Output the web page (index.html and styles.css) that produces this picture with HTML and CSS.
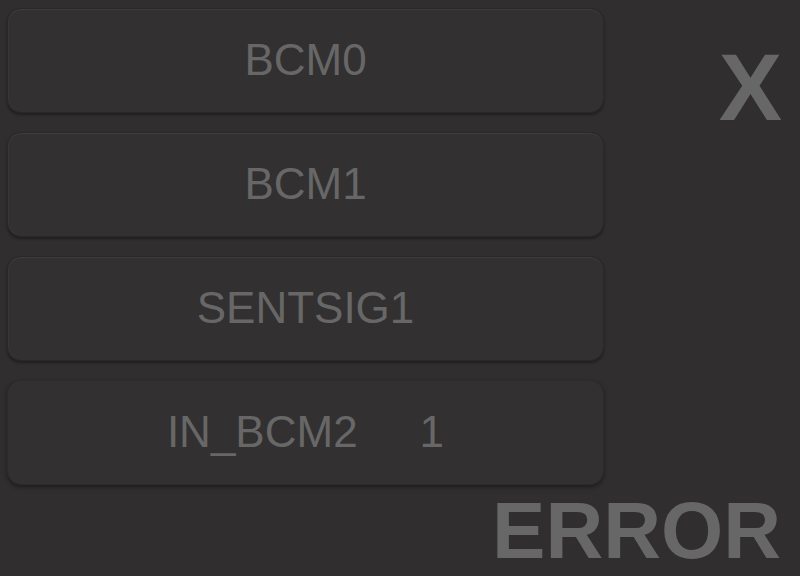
FILE: index.html
```html
<!DOCTYPE html>
<html>
<head>
<meta charset="utf-8">
<link rel="stylesheet" href="styles.css">
</head>
<body>
<div class="screen">
  <div class="buttons">
    <div class="btn">BCM0</div>
    <div class="btn">BCM1</div>
    <div class="btn">SENTSIG1</div>
    <div class="btn btn-flat"><span>IN_BCM2</span><span>1</span></div>
  </div>
  <div class="close">X</div>
  <div class="error">ERROR</div>
</div>
</body>
</html>
```
FILE: styles.css
```css
html, body {
  margin: 0;
  padding: 0;
  background: #302e2f;
  width: 800px;
  height: 576px;
  overflow: hidden;
}
.screen {
  display: grid;
  grid-template-columns: 597px 1fr;
  grid-template-rows: auto auto;
  padding: 8px 0 0 7px;
  font-family: "Liberation Sans", Arial, sans-serif;
  color: #676767;
}
.buttons {
  display: flex;
  flex-direction: column;
  gap: 19px;
}
.btn {
  height: 102px;
  box-sizing: content-box;
  border: 1px solid #2a2829;
  border-radius: 14px;
  background: #323031;
  box-shadow: inset 0 1px 1px rgba(255,255,255,0.07), inset 1px 0 1px rgba(255,255,255,0.04), 0 2px 3px rgba(0,0,0,0.35);
  display: flex;
  align-items: center;
  justify-content: center;
  gap: 62px;
  font-size: 44px;
  padding-bottom: 1px;
}
.btn-flat {
  box-shadow: 0 2px 4px rgba(0,0,0,0.4);
  border-color: #2d2b2c;
}
.close {
  justify-self: end;
  align-self: start;
  font-size: 95px;
  font-weight: bold;
  line-height: 1;
  margin-top: 32px;
  margin-right: 18px;
}
.error {
  grid-column: 1 / 3;
  justify-self: end;
  font-size: 80px;
  font-weight: bold;
  line-height: 1;
  margin-top: 6px;
  margin-right: 19px;
}
```
